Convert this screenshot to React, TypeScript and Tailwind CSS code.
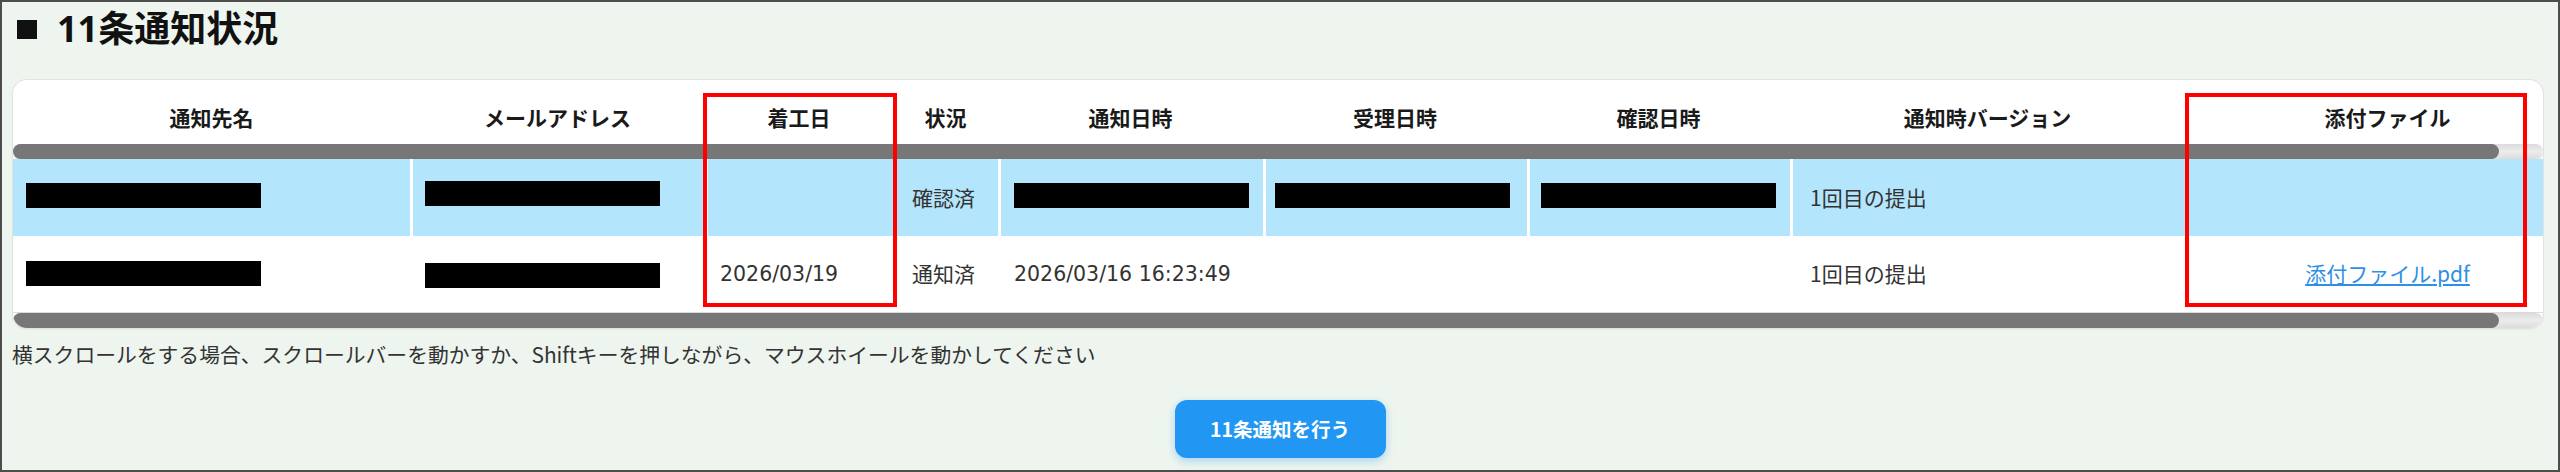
import React from "react";

const FONT = { fontFamily: '"Noto Sans CJK JP", "Noto Sans", sans-serif' };

const widths = [
  "w-[397px]",
  "w-[295px]",
  "w-[188px]",
  "w-[105px]",
  "w-[265px]",
  "w-[264px]",
  "w-[263px]",
  "w-[395px]",
  "w-[405px]",
];

const headers = [
  "通知先名",
  "メールアドレス",
  "着工日",
  "状況",
  "通知日時",
  "受理日時",
  "確認日時",
  "通知時バージョン",
  "添付ファイル",
];

function Redact({ offset = "" }: { offset?: string }) {
  return <div className={`h-[25px] w-[235px] bg-black ${offset}`} />;
}

function ScrollBar() {
  return (
    <div className="h-[15px] w-full shrink-0 rounded-full bg-gradient-to-b from-[#dcdcdc] via-[#ececec] to-[#dcdcdc] shadow-[0_1px_2px_rgba(0,0,0,0.15)]">
      <div className="h-full w-[2486px] rounded-full bg-[#777777]" />
    </div>
  );
}

export default function App() {
  return (
    <div
      style={FONT}
      className="relative h-[472px] w-full overflow-hidden border-2 border-[#4d4d4d] bg-[#eef5ef] text-[#333]"
    >
      {/* Title */}
      <div className="flex h-[54px] items-center pl-[15px]">
        <span className="mr-[20px] inline-block h-[19px] w-[20px] bg-[#111]" aria-hidden="true" />
        <h2 className="font-['Noto_Sans','Noto_Sans_CJK_JP',sans-serif] text-[36px] font-bold leading-none text-[#111]">
          11条通知状況
        </h2>
      </div>

      {/* Card */}
      <div className="ml-[11px] mr-[15px] mt-[24px] overflow-hidden rounded-[14px] bg-white shadow-[0_0_0_1px_#e2e2e2,0_1px_3px_rgba(0,0,0,0.08)]">
        {/* Header */}
        <div className="flex h-[64px] w-[2577px] pt-[12px]">
          {headers.map((h, i) => (
            <div
              key={h}
              className={`${widths[i]} flex shrink-0 items-center justify-center text-[21px] font-bold text-[#1a1a1a]`}
            >
              {h}
            </div>
          ))}
        </div>
        <ScrollBar />

        {/* Row 1 */}
        <div className="flex h-[77px] w-[2577px] bg-[#b3e5fc] text-[21px]">
          <div className={`${widths[0]} flex shrink-0 items-center pl-[13px]`}>
            <Redact offset="-mt-[4px]" />
          </div>
          <div className={`${widths[1]} flex shrink-0 items-center border-l-[3px] border-white pl-[12px]`}>
            <Redact offset="-mt-[8px]" />
          </div>
          <div className={`${widths[2]} flex shrink-0 items-center border-l-[3px] border-white pl-[15px]`} />
          <div className={`${widths[3]} flex shrink-0 items-center border-l-[3px] border-white pl-[16px]`}>
            確認済
          </div>
          <div className={`${widths[4]} flex shrink-0 items-center border-l-[3px] border-white pl-[13px]`}>
            <Redact offset="-mt-[4px]" />
          </div>
          <div className={`${widths[5]} flex shrink-0 items-center border-l-[3px] border-white pl-[9px]`}>
            <Redact offset="-mt-[4px]" />
          </div>
          <div className={`${widths[6]} flex shrink-0 items-center border-l-[3px] border-white pl-[11px]`}>
            <Redact offset="-mt-[4px]" />
          </div>
          <div className={`${widths[7]} flex shrink-0 items-center border-l-[3px] border-white pl-[17px]`}>
            1回目の提出
          </div>
          <div className={`${widths[8]} flex shrink-0 items-center border-l-[3px] border-white`} />
        </div>

        {/* Row 2 */}
        <div className="flex h-[77px] w-[2577px] border-b border-[#dddddd] text-[21px]">
          <div className={`${widths[0]} flex shrink-0 items-center pl-[13px]`}>
            <Redact offset="-mt-[2px]" />
          </div>
          <div className={`${widths[1]} flex shrink-0 items-center pl-[15px]`}>
            <Redact offset="mt-[2px]" />
          </div>
          <div className={`${widths[2]} flex shrink-0 items-center pl-[15px] font-['DejaVu_Sans',sans-serif] text-[20.5px]`}>
            2026/03/19
          </div>
          <div className={`${widths[3]} flex shrink-0 items-center pl-[19px]`}>通知済</div>
          <div className={`${widths[4]} flex shrink-0 items-center whitespace-nowrap pl-[16px] font-['DejaVu_Sans',sans-serif] text-[20.5px]`}>
            2026/03/16 16:23:49
          </div>
          <div className={`${widths[5]} shrink-0`} />
          <div className={`${widths[6]} shrink-0`} />
          <div className={`${widths[7]} flex shrink-0 items-center pl-[20px]`}>1回目の提出</div>
          <div className={`${widths[8]} flex shrink-0 items-center justify-center`}>
            <a href="#" className="text-[#2f8fe6] underline underline-offset-2">
              添付ファイル.pdf
            </a>
          </div>
        </div>
        <ScrollBar />
      </div>

      {/* Note */}
      <p className="mt-[11px] pl-[10px] text-[20.8px] leading-[30px] text-[#333]">
        横スクロールをする場合、スクロールバーを動かすか、Shiftキーを押しながら、マウスホイールを動かしてください
      </p>

      {/* Button */}
      <div className="mt-[31px] flex justify-center">
        <button
          type="button"
          className="h-[58px] w-[211px] rounded-[12px] bg-[#2196f3] text-[19.5px] font-bold text-white shadow-[0_3px_8px_rgba(33,150,243,0.35)]"
        >
          11条通知を行う
        </button>
      </div>

      {/* Red annotation boxes */}
      <div className="pointer-events-none absolute left-[701px] top-[91px] h-[214px] w-[194px] border-[4px] border-[#ff0000]" />
      <div className="pointer-events-none absolute left-[2183px] top-[91px] h-[214px] w-[342px] border-[4px] border-[#ff0000]" />
    </div>
  );
}
